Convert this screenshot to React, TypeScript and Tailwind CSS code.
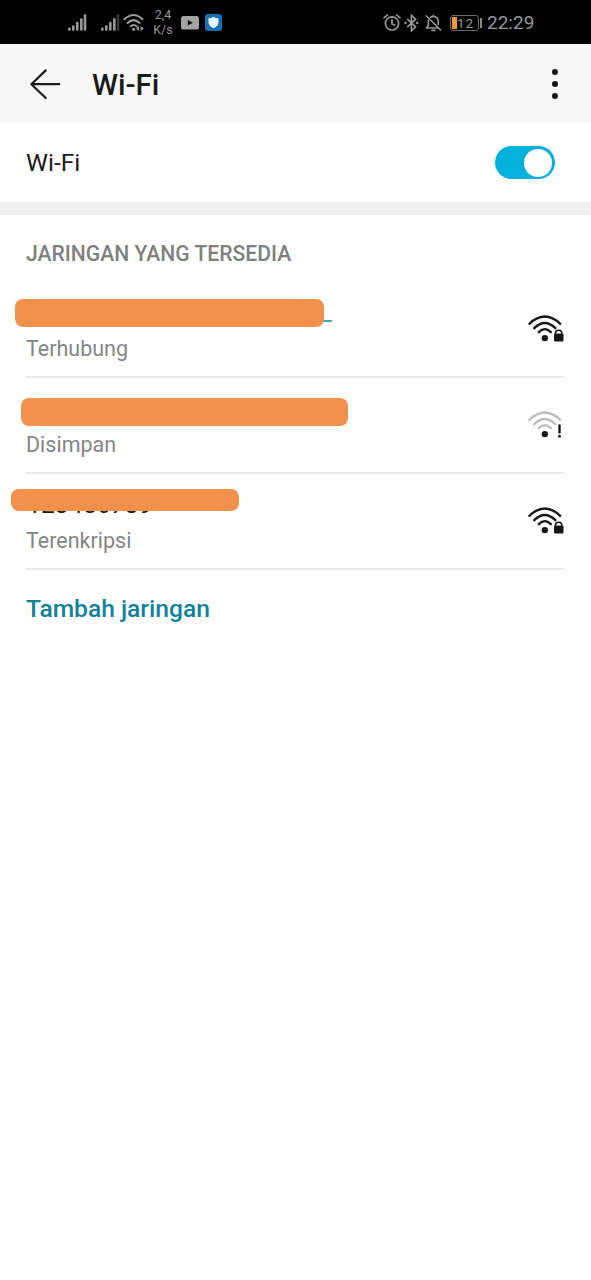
import React, { useState } from 'react'

type Keamanan = 'terkunci' | 'peringatan'

interface Jaringan {
  id: number
  nama: string
  status: string
  keamanan: Keamanan
  sensor: string
}

const jaringanTersedia: Jaringan[] = [
  {
    id: 1,
    nama: '',
    status: 'Terhubung',
    keamanan: 'terkunci',
    sensor: 'left-[15px] top-[16.5px] w-[309px] h-[28.5px]'
  },
  {
    id: 2,
    nama: '',
    status: 'Disimpan',
    keamanan: 'peringatan',
    sensor: 'left-[21px] top-[20px] w-[327px] h-[28px]'
  },
  {
    id: 3,
    nama: '123456789',
    status: 'Terenkripsi',
    keamanan: 'terkunci',
    sensor: 'left-[10.5px] top-[14.7px] w-[228px] h-[22.8px]'
  }
]

function Sinyal({ redup = false }: { redup?: boolean }) {
  return (
    <svg width="19" height="18" viewBox="0 0 19 18" fill="#989898">
      <rect x="0" y="13.6" width="2.6" height="3.2" rx="1" />
      <rect x="4" y="11.2" width="2.6" height="5.6" rx="1" />
      <rect x="8" y="7.8" width="2.6" height="9" rx="1" />
      <rect x="12" y="4.2" width="2.6" height="12.6" rx="1" />
      <rect x="15.7" y="0.3" width="2.6" height="16.5" rx="1" fill={redup ? '#3a3a3a' : '#989898'} />
    </svg>
  )
}

function WifiIcon({ keamanan }: { keamanan: Keamanan }) {
  const terkunci = keamanan === 'terkunci'
  return (
    <svg width="38" height="30" viewBox="0 0 38 30" fill="none">
      <g stroke={terkunci ? '#171717' : '#bdbdbd'} strokeWidth="2.4" strokeLinecap="round">
        <path d="M2.4 10.8 Q17.8 -3.6 33.2 10.8" />
        <path d="M7.2 15.2 Q17.8 4.9 28.4 15.2" />
        <path d="M11.8 19.2 Q17.8 13 23.8 19.2" />
      </g>
      <circle cx="17.8" cy="25.1" r="3.2" fill="#171717" />
      {terkunci ? (
        <>
          <path d="M28.6 21 V19.6 Q28.6 17.3 31.6 17.3 Q34.7 17.3 34.7 19.6 V21" stroke="#171717" strokeWidth="1.5" />
          <rect x="27" y="20.6" width="9.5" height="7.8" rx="0.8" fill="#171717" />
        </>
      ) : (
        <>
          <path d="M32.5 16.4 V23.4" stroke="#171717" strokeWidth="2.4" strokeLinecap="round" />
          <circle cx="32.5" cy="27.2" r="1.5" fill="#171717" />
        </>
      )}
    </svg>
  )
}

function StatusBar() {
  return (
    <div className="flex h-11 items-center bg-black pl-[68px] pr-14 pt-px text-[#989898]">
      <Sinyal />
      <span className="ml-[14px] flex"><Sinyal redup /></span>
      {/* Wi-Fi */}
      <svg className="ml-[3px]" width="22" height="20" viewBox="0 0 22 20" fill="none" stroke="#989898" strokeWidth="2" strokeLinecap="round">
        <path d="M1.5 6.2 Q10.5 -2.3 19.5 6.2" />
        <path d="M4.6 10 Q10.5 4.2 16.6 10" />
        <path d="M7.7 13.3 Q10.5 10.6 13.6 13.3" />
        <circle cx="10.6" cy="16.3" r="1.6" fill="#989898" stroke="none" />
        <path d="M16 12.9 V18.3 L13 15.6 Z M17.6 12.9 V18.3 L20.8 15.6 Z" fill="#989898" stroke="none" />
      </svg>
      <div className="ml-[8px] w-[20px] text-center text-[12.5px] leading-[14.5px]">
        <div>2,4</div>
        <div>K/s</div>
      </div>
      {/* YouTube */}
      <svg className="ml-[8px]" width="18" height="14" viewBox="0 0 18 14">
        <rect width="18" height="13.6" rx="2.6" fill="#a3a3a3" />
        <path d="M6.8 4 L12 6.8 L6.8 9.6 Z" fill="#111" />
      </svg>
      <svg className="ml-[6px]" width="17" height="17" viewBox="0 0 17 17">
        <rect width="17" height="17" rx="3" fill="#1670b5" />
        <path d="M8.5 2.8 Q11 4.5 13.5 4.3 V8.2 Q13.5 12 8.5 14.3 Q3.5 12 3.5 8.2 V4.3 Q6 4.5 8.5 2.8 Z" fill="#e7f5ff" />
      </svg>

      {/* Alarm, Bluetooth, senyap */}
      <div className="ml-auto flex items-center">
        <svg width="18" height="18" viewBox="0 0 18 18" fill="none" stroke="#989898" strokeWidth="1.7" strokeLinecap="round">
          <circle cx="9" cy="9.4" r="6.6" />
          <path d="M9 5.7 V9.8 L11.7 11.2 M1 3.8 L4.3 1.2 M17 3.8 L13.7 1.2" />
        </svg>
        <svg className="ml-[3px]" width="15" height="18" viewBox="0 0 15 18" fill="none" stroke="#989898" strokeWidth="1.6">
          <path d="M3.2 4.8 L11.6 12.8 L7.4 16.8 V1.2 L11.6 5.2 L3.2 13.2" />
          <circle cx="1.5" cy="9" r="1.2" fill="#989898" stroke="none" />
          <circle cx="13.2" cy="9" r="1.2" fill="#989898" stroke="none" />
        </svg>
        <svg className="ml-[6px]" width="17" height="18" viewBox="0 0 17 18" fill="none" stroke="#989898" strokeWidth="1.6" strokeLinecap="round" strokeLinejoin="round">
          <path d="M5.5 3.3 Q6.7 2.5 8.3 2.4 Q13 2.5 13.2 7.2 V10.4 M3.4 6.2 V11.2 L1.5 14 H13.2 M7 16.4 H9.8 M8.3 2.2 V1.2" />
          <path d="M1.2 1.8 L15.6 16" />
        </svg>
        <div className="relative ml-[8px] h-4 w-[29px] rounded-[3px] border border-[#6a6a6a]">
          <div className="ml-px mt-px h-3 w-[5px] bg-[#f59a33]" />
          <span className="absolute left-[6px] top-0 text-[13.5px] leading-[14px] tracking-[0.8px]">12</span>
        </div>
        <div className="ml-px h-[10px] w-[2px] bg-[#8a8a8a]" />
        <span className="ml-[5px] w-[48px] pt-px text-[19px] leading-[22px]">22:29</span>
      </div>
    </div>
  )
}

export default function PengaturanWifi() {
  const [aktif, setAktif] = useState(true)

  return (
    <main className="min-h-screen bg-white font-['Roboto',sans-serif] text-[#1b1b1b]">
      <StatusBar />

      <header className="flex h-[79px] items-center bg-[#f7f7f7] pl-[29px] pr-[33px]">
        <button aria-label="Kembali">
          <svg width="32" height="32" viewBox="0 0 32 32" fill="none" stroke="#1b1b1b" strokeWidth="2.2" strokeLinecap="round" strokeLinejoin="round">
            <path d="M30.2 16.2 H2.4 M16.7 2.4 L2.4 16.2 L16.7 30" />
          </svg>
        </button>
        <h1 className="ml-[31px] pt-[2px] text-[29.5px] font-medium leading-9">Wi-Fi</h1>
        <button aria-label="Menu" className="ml-auto flex flex-col gap-[6px]">
          <span className="size-[6px] rounded-full bg-[#171717]" />
          <span className="size-[6px] rounded-full bg-[#171717]" />
          <span className="size-[6px] rounded-full bg-[#171717]" />
        </button>
      </header>

      <div className="flex h-[79px] items-center justify-between pl-[26px] pr-9">
        <span className="text-[24.7px] leading-8">Wi-Fi</span>
        <button
          role="switch"
          aria-checked={aktif}
          aria-label="Wi-Fi"
          onClick={() => setAktif(!aktif)}
          className={`flex h-[33px] w-[60px] items-center rounded-full px-[3px] ${aktif ? 'justify-end bg-[#04b0dc]' : 'justify-start bg-gray-300'}`}
        >
          <span className="size-[28px] rounded-full bg-white" />
        </button>
      </div>
      <div className="h-[13px] bg-[#f1f1f1]" />

      <section>
        <h2 className="flex h-[67px] items-center pl-[26px] pt-[10px] text-[21.15px] font-medium text-[#808080]">
          JARINGAN YANG TERSEDIA
        </h2>

        <ul>
          {jaringanTersedia.map((j) => (
            <li key={j.id} className="relative h-24 pl-[26px] pr-[26px]">
              <div className="flex h-full items-start justify-between border-b-2 border-[#e9e9e9]">
                <div className="pt-[15px]">
                  <div className="h-8 pl-px text-[24.8px] leading-8">{j.nama}</div>
                  <div className="mt-[6px] text-[21.5px] leading-7 text-[#858585]">{j.status}</div>
                </div>
                <div className="mt-[31px]"><WifiIcon keamanan={j.keamanan} /></div>
              </div>
              {j.id === 1 && <span className="absolute left-[320px] top-[38px] h-[2px] w-3 bg-[#34a9bf]" />}
              {/* penutup nama jaringan */}
              <span className={`absolute rounded-lg bg-[#f2914b] ${j.sensor}`} />
            </li>
          ))}
        </ul>

        <button className="ml-[26px] mt-[23px] block text-[24.6px] font-medium leading-8 text-[#12829c]">
          Tambah jaringan
        </button>
      </section>
    </main>
  )
}
